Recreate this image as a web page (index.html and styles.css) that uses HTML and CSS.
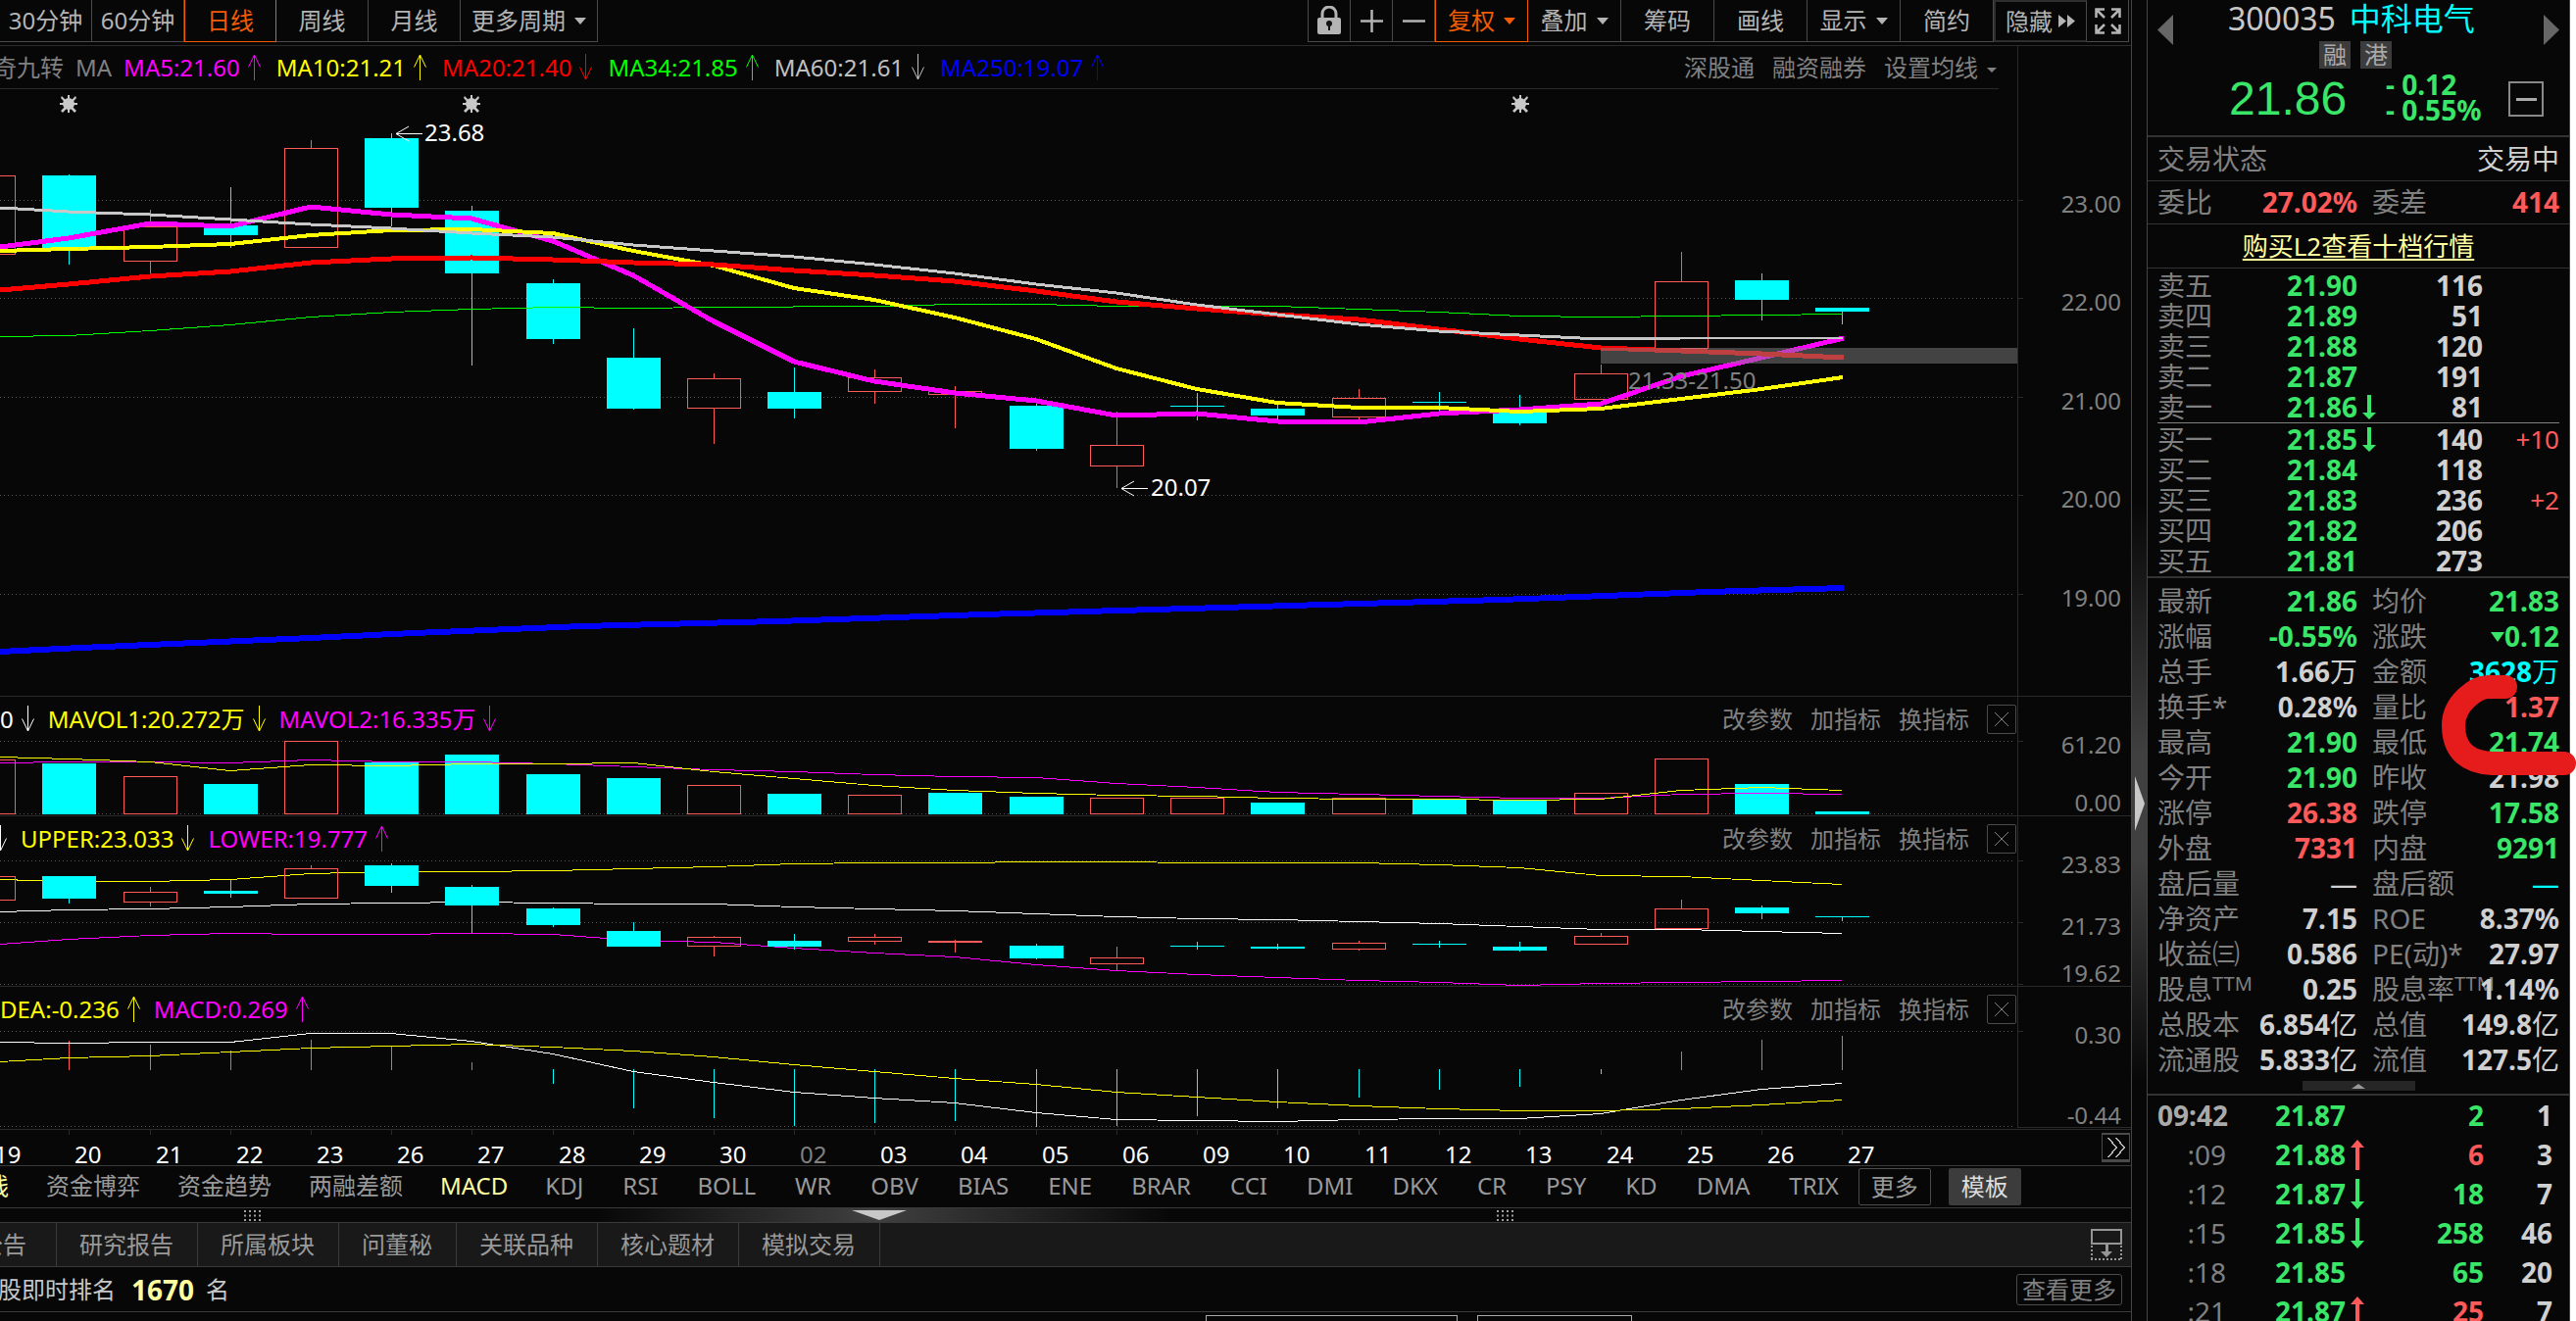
FILE: index.html
```html
<!DOCTYPE html>
<html lang="zh-CN">
<head>
<meta charset="utf-8">
<title>中科电气 300035</title>
<link rel="stylesheet" href="styles.css">
</head>
<body>
<svg class="defs" width="0" height="0" aria-hidden="true">
  <symbol id="up" viewBox="0 0 13 27"><path d="M6.500 27V1M.5 13.500 6.500 1l6 12.500" fill="none" stroke="currentColor"/></symbol>
  <symbol id="down" viewBox="0 0 13 27"><path d="M6.500 0v26M.5 13.500l6 12.500 6-12.500" fill="none" stroke="currentColor"/></symbol>
  <symbol id="fat-up" viewBox="0 0 14 31"><path d="M7 0 0 8h5v23h4V8h5z" fill="currentColor"/></symbol>
  <symbol id="fat-down" viewBox="0 0 14 25"><path d="M7 25 0 18h5V0h4v18h5z" fill="currentColor"/></symbol>
  <symbol id="gear" viewBox="-10 -10 20 20"><path d="M-1-9h2v18h-2zM-9-1H9v2H-9zM-7-8l15 15-2 2L-8-6zM7-8-8 7l2 2L8-6z" fill="#c8c8c8"/><circle r="6" fill="#c8c8c8"/></symbol>
  <symbol id="grip" viewBox="0 0 17 11"><path d="M0 1h17M0 5.500h17M0 10h17" stroke="#a0a0a0" stroke-width="2" stroke-dasharray="2 3" fill="none"/></symbol>
</svg>

<main class="market">
  <nav class="toolbar">
    <div class="group periods">
      <button>30分钟</button><button>60分钟</button><button class="on">日线</button><button>周线</button><button>月线</button><button class="more">更多周期<i class="caret"></i></button>
    </div>
    <div class="group tools">
      <button class="icon" aria-label="锁定"><svg width="26" height="30" viewBox="0 0 26 30"><path d="M6 13V8a7 7 0 0 1 14 0v5" fill="none" stroke="#b4b4b4" stroke-width="3"/><rect x="1" y="12" width="24" height="17" rx="2" fill="#b4b4b4"/><circle cx="13" cy="18" r="3" fill="#111"/><path d="M12 18h2v7h-2z" fill="#111"/></svg></button>
      <button class="icon" aria-label="放大"><svg width="23" height="23" viewBox="0 0 23 23"><path d="M11.500 0v23M0 11.500h23" stroke="#b4b4b4" stroke-width="2.500"/></svg></button>
      <button class="icon" aria-label="缩小"><svg width="23" height="23" viewBox="0 0 23 23"><path d="M0 11.500h23" stroke="#b4b4b4" stroke-width="2.500"/></svg></button>
      <button class="on">复权<i class="caret"></i></button><button>叠加<i class="caret"></i></button><button>筹码</button><button>画线</button><button>显示<i class="caret"></i></button><button>简约</button>
      <button class="hide">隐藏<svg width="18" height="13" viewBox="0 0 18 13"><path d="M0 0l8 6.500L0 13zM9 0l8 6.500L9 13z" fill="#b4b4b4"/></svg></button>
      <button class="icon" aria-label="全屏"><svg width="27" height="27" viewBox="0 0 27 27"><path d="M10 1.500H1.500V10M17 1.500h8.500V10M10 25.500H1.500V17M17 25.500h8.500V17M2 2l8 8M25 2l-8 8M2 25l8-8M25 25l-8-8" fill="none" stroke="#b4b4b4" stroke-width="2.500"/></svg></button>
    </div>
  </nav>

  <section class="panel main-panel">
    <header class="legend">
      <div class="series shifted">
        <span class="dim">神奇九转</span><span class="dim">MA</span>
        <span class="mag">MA5:21.60<svg><use href="#up"/></svg></span>
        <span class="yel">MA10:21.21<svg><use href="#up"/></svg></span>
        <span class="red">MA20:21.40<svg><use href="#down"/></svg></span>
        <span class="grn">MA34:21.85<svg><use href="#up"/></svg></span>
        <span class="gry">MA60:21.61<svg><use href="#down"/></svg></span>
        <span class="blu">MA250:19.07<svg><use href="#up"/></svg></span>
      </div>
      <div class="links"><a href="#">深股通</a><a href="#">融资融券</a><a href="#">设置均线<i class="caret"></i></a></div>
      <div class="axis-head"></div>
    </header>
    <svg class="plot" viewBox="0 91 2175 619">
      <path class="frame" d="M2058.500 91V710"/>
      <path class="grid" d="M0 204.500H2053M0 304.500H2053M0 405.500H2053M0 505.500H2053M0 606.500H2053"/>
      <path class="frame" d="M2059 204.500h5M2059 304.500h5M2059 405.500h5M2059 505.500h5M2059 606.500h5"/>
      <path class="cy" d="M43 179h55v74H43zM208 230h55v10H208zM372 141h55v71H372zM454 215h55v64H454zM537 289h55v57H537zM619 365h55v52H619zM783 400h55v17H783zM1030 414h55v44H1030zM1194 414h55v1H1194zM1276 417h55v7H1276zM1441 410h55v1H1441zM1523 421h55v11H1523zM1770 286h55v20H1770zM1852 314h55v4H1852z"/>
      <path class="cw" d="M70.500 178V270M235.500 191V253M399.500 136V231M481.500 210V373M564.500 285V351M646.500 335V418M810.500 375V427M1057.500 412V460M1221.500 401V429M1303.500 410V429M1468.500 400V420M1550.500 403V434M1797.500 279V327M1879.500 314V331"/>
      <path class="rd" d="M-40 179.500H15.500V259.500H-40M126.500 231.500h54V266.500h-54zM290.500 151.500h54V252.500h-54zM701.500 386.500h54V416.500h-54zM865.500 385.500h54V399.500h-54zM947.500 399.500h54V402.500h-54zM1112.500 454.500h54V475.500h-54zM1359.500 406.500h54V425.500h-54zM1606.500 381.500h54V407.500h-54zM1688.500 287.500h54V355.500h-54zM153.500 214V231M153.500 267V282M317.500 143V151M728.500 381V386M728.500 417V453M892.500 377V385M892.500 400V412M974.500 394V437M1139.500 420V454M1139.500 476V498M1386.500 397V406M1386.500 426V430M1633.500 372V381M1715.500 257V287"/>
      <g transform="translate(0 .5)"><polyline class="ln g" points="0,343 70,342 153,337 235,331 317,323 399,318 481,315 564,313 646,314 728,313 892,312 974,310 1057,310 1139,312 1303,312 1386,315 1468,318 1550,322 1633,323 1715,322 1797,321 1880,320"/></g>
      <polyline class="ln b w6" points="0,665 82,661 317,651 422,646 594,639 792,634 1003,627 1281,619 1531,612 1743,604 1881,600"/>
      <polyline class="ln m w5" points="0,252 70,243 153,228 235,231 317,211 399,219 481,223 564,246 646,281 728,328 810,369 892,389 974,401 1057,409 1139,424 1221,422 1303,430 1386,431 1468,422 1550,418 1633,412 1715,384 1797,365 1881,345"/>
      <polyline class="ln y w4" points="0,256 70,254 153,252 235,249 317,240 399,235 481,234 564,238 646,256 728,271 810,294 892,306 974,324 1057,346 1139,376 1221,397 1303,411 1386,416 1468,416 1550,420 1633,417 1715,407 1797,397 1880,385"/>
      <polyline class="ln r w5" points="0,296 70,290 153,282 235,277 317,268 399,264 481,263 564,265 646,268 728,270 810,276 892,281 974,287 1057,297 1139,308 1221,315 1303,321 1386,326 1468,336 1550,346 1633,355 1715,358 1797,361 1881,365"/>
      <polyline class="ln a w3" points="0,212 70,216 153,219 235,224 317,229 399,233 481,238 564,242 646,250 728,256 810,262 892,270 974,279 1057,290 1139,299 1221,311 1303,321 1386,331 1468,338 1550,342 1633,346 1715,345 1880,345"/>
      <rect class="band" x="1633" y="355" width="425" height="16"/>
      <use href="#gear" x="60" y="96" width="20" height="20"/><use href="#gear" x="471" y="96" width="20" height="20"/><use href="#gear" x="1541" y="96" width="20" height="20"/>
      <path class="mark" d="M431 136.500H404M417 129l-13 7.500 13 7.500M1171 498.500h-27M1157 491l-13 7.500 13 7.500"/>
      <text class="t white" x="433" y="144">23.68</text><text class="t white" x="1174" y="506">20.07</text><text class="t" x="1661" y="397">21.33-21.50</text>
      <text class="t end" x="2164" y="217">23.00</text><text class="t end" x="2164" y="317">22.00</text><text class="t end" x="2164" y="418">21.00</text><text class="t end" x="2164" y="518">20.00</text><text class="t end" x="2164" y="619">19.00</text>
    </svg>
  </section>

  <section class="panel">
    <header class="legend">
      <div class="series"><span class="white">0<svg><use href="#down"/></svg></span><span class="yel">MAVOL1:20.272万<svg><use href="#down"/></svg></span><span class="mag">MAVOL2:16.335万<svg><use href="#down"/></svg></span></div>
      <div class="links"><a href="#">改参数</a><a href="#">加指标</a><a href="#">换指标</a><button class="close" aria-label="关闭"><svg viewBox="0 0 14 14"><path d="M0 0l14 14M14 0 0 14" stroke="#808080"/></svg></button></div>
      <div class="axis-head"></div>
    </header>
    <svg class="plot" viewBox="0 756 2175 76">
      <path class="frame" d="M2058.500 756V832M2059 756.500h5"/>
      <path class="grid" d="M0 756.500H2053M0 830.500H2053"/>
      <path class="cy" d="M43 779h55V831H43zM208 800h55V831H208zM372 778h55V831H372zM454 770h55V831H454zM537 790h55V831H537zM619 794h55V831H619zM783 810h55V831H783zM947 809h55V831H947zM1030 813h55V831H1030zM1276 819h55V831H1276zM1441 815h55V831H1441zM1523 816h55V831H1523zM1770 800h55V831H1770zM1852 828h55V831H1852z"/>
      <path class="rd" d="M-40 775.500H15.500V830.500H-40M126.500 792.500h54V830.500h-54zM290.500 756.500h54V830.500h-54zM701.500 801.500h54V830.500h-54zM865.500 811.500h54V830.500h-54zM1112.500 814.500h54V830.500h-54zM1194.500 814.500h54V830.500h-54zM1359.500 814.500h54V830.500h-54zM1606.500 809.500h54V830.500h-54zM1688.500 774.500h54V830.500h-54z"/>
      <g transform="translate(0 .5)">
      <polyline class="ln m" points="0,778 70,777 153,777 235,778 317,775 399,777 481,777 564,779 646,782 728,785 810,787 892,790 974,792 1057,793 1139,799 1221,803 1303,808 1386,810 1468,812 1550,814 1633,814 1715,810 1797,809 1879,810"/>
      <polyline class="ln y" points="0,772 70,774 153,777 235,786 317,780 399,781 481,779 564,779 646,778 728,787 810,794 892,801 974,806 1057,809 1139,811 1221,812 1303,814 1386,815 1468,815 1550,816 1633,815 1715,806 1797,803 1879,806"/>
      </g>
      <text class="t end" x="2164" y="769">61.20</text><text class="t end" x="2164" y="828">0.00</text>
    </svg>
  </section>

  <section class="panel">
    <header class="legend">
      <div class="series boll"><span class="white"><svg><use href="#down"/></svg></span><span class="yel">UPPER:23.033<svg><use href="#down"/></svg></span><span class="mag">LOWER:19.777<svg><use href="#up"/></svg></span></div>
      <div class="links"><a href="#">改参数</a><a href="#">加指标</a><a href="#">换指标</a><button class="close" aria-label="关闭"><svg viewBox="0 0 14 14"><path d="M0 0l14 14M14 0 0 14" stroke="#808080"/></svg></button></div>
      <div class="axis-head"></div>
    </header>
    <svg class="plot" viewBox="0 878 2175 128">
      <path class="frame" d="M2058.500 878V1006M2059 878.500h5M2059 941.500h5M2059 1004.500h5"/>
      <path class="grid" d="M0 878.500H2053M0 941.500H2053M0 1004.500H2053"/>
      <g transform="translate(0 .5)">
      <polyline class="ln y" points="0,897 70,899 153,899 235,897 317,891 399,889 481,889 564,888 646,886 728,884 810,881 892,880 974,880 1057,879 1139,879 1221,880 1386,880 1468,882 1550,885 1633,893 1715,894 1797,898 1879,902"/>
      <polyline class="ln w" points="0,930 70,928 153,927 235,925 317,922 399,921 481,920 564,921 646,922 728,922 810,925 892,927 974,929 1057,932 1139,935 1221,937 1303,938 1386,940 1468,942 1550,945 1633,948 1715,948 1797,950 1879,952"/>
      <polyline class="ln m" points="0,963 70,958 153,954 235,952 317,953 399,953 481,952 564,953 646,959 728,961 810,967 892,972 974,976 1057,984 1139,990 1221,994 1303,997 1386,1000 1468,1002 1550,1005 1633,1003 1715,1002 1797,1001 1879,1000"/>
      </g>
      <path class="cy" d="M43 894h55V917H43zM208 909h55V912H208zM372 883h55V904H372zM454 905h55V924H454zM537 927h55V944H537zM619 950h55V966H619zM783 960h55V966H783zM1030 965h55V978H1030zM1194 965h55V966H1194zM1276 966h55V968H1276zM1441 963h55V964H1441zM1523 966h55V970H1523zM1770 926h55V932H1770zM1852 935h55V936H1852z"/>
      <path class="cw" d="M70.500 894V922M235.500 898V916M399.500 881V911M481.500 903V952M564.500 926V946M646.500 941V966M810.500 953V969M1057.500 963V979M1221.500 961V969M1303.500 963V969M1468.500 960V967M1550.500 961V971M1797.500 924V938M1879.500 935V940"/>
      <path class="rd" d="M-40 894.500H15.500V918.500H-40M126.500 910.500h54V920.500h-54zM290.500 886.500h54V916.500h-54zM701.500 956.500h54V965.500h-54zM865.500 956.500h54V960.500h-54zM947.500 960.500h54V961.500h-54zM1112.500 977.500h54V983.500h-54zM1359.500 962.500h54V968.500h-54zM1606.500 955.500h54V963.500h-54zM1688.500 927.500h54V947.500h-54zM153.500 905V910M153.500 921V925M317.500 883V886M728.500 955V956M728.500 966V976M892.500 953V956M892.500 961V964M974.500 959V972M1139.500 966V977M1139.500 984V990M1386.500 960V962M1386.500 969V970M1633.500 952V955M1715.500 918V927"/>
      <text class="t end" x="2164" y="891">23.83</text><text class="t end" x="2164" y="954">21.73</text><text class="t end" x="2164" y="1002">19.62</text>
    </svg>
  </section>

  <section class="panel">
    <header class="legend">
      <div class="series"><span class="yel">DEA:-0.236<svg><use href="#up"/></svg></span><span class="mag">MACD:0.269<svg><use href="#up"/></svg></span></div>
      <div class="links"><a href="#">改参数</a><a href="#">加指标</a><a href="#">换指标</a><button class="close" aria-label="关闭"><svg viewBox="0 0 14 14"><path d="M0 0l14 14M14 0 0 14" stroke="#808080"/></svg></button></div>
      <div class="axis-head"></div>
    </header>
    <svg class="plot" viewBox="0 1052 2175 100">
      <path class="frame" d="M2058.500 1052V1150.500H2174M2059 1052.500h5"/>
      <path class="grid" d="M0 1052.500H2053M0 1149.500H2053"/>
      <path class="rd" d="M70.500 1062V1092M153.500 1066V1092M235.500 1072V1092M317.500 1061V1092M399.500 1067V1092M481.500 1084V1092M1715.500 1073V1092M1797.500 1061V1092M1879.500 1057V1092"/>
      <path class="cw" d="M564.500 1091V1106M646.500 1091V1131M728.500 1091V1141M810.500 1091V1149M892.500 1091V1146M974.500 1091V1144M1057.500 1091V1150M1139.500 1091V1149M1221.500 1091V1139M1303.500 1091V1131M1386.500 1091V1120M1468.500 1091V1112M1550.500 1091V1109M1633.500 1091V1096"/>
      <g transform="translate(0 .5)">
      <polyline class="ln w" points="0,1063 70,1064 153,1063 235,1063 317,1054 399,1054 481,1062 564,1075 646,1093 728,1104 810,1114 892,1120 974,1125 1057,1135 1139,1142 1221,1143 1303,1144 1386,1142 1468,1141 1550,1141 1633,1136 1715,1122 1797,1111 1879,1105"/>
      <polyline class="ln y" points="0,1083 70,1079 153,1077 235,1073 317,1069 399,1067 481,1065 564,1068 646,1072 728,1078 810,1086 892,1093 974,1100 1057,1106 1139,1114 1221,1119 1303,1124 1386,1128 1468,1131 1550,1133 1633,1133 1715,1131 1797,1127 1879,1122"/>
      </g>
      <text class="t end" x="2164" y="1065">0.30</text><text class="t end" x="2164" y="1147">-0.44</text>
    </svg>
  </section>

  <div class="dates">
    <svg viewBox="0 1153 2144 36">
      <path class="frame" d="M70.500 1153v5M153.500 1153v5M235.500 1153v5M317.500 1153v5M399.500 1153v5M481.500 1153v5M564.500 1153v5M646.500 1153v5M728.500 1153v5M810.500 1153v5M892.500 1153v5M974.500 1153v5M1057.500 1153v5M1139.500 1153v5M1221.500 1153v5M1303.500 1153v5M1386.500 1153v5M1468.500 1153v5M1550.500 1153v5M1633.500 1153v5M1715.500 1153v5M1797.500 1153v5M1879.500 1153v5"/>
      <g class="t white"><text x="-6" y="1187">19</text><text x="76" y="1187">20</text><text x="159" y="1187">21</text><text x="241" y="1187">22</text><text x="323" y="1187">23</text><text x="405" y="1187">26</text><text x="487" y="1187">27</text><text x="570" y="1187">28</text><text x="652" y="1187">29</text><text x="734" y="1187">30</text><text class="t" x="816" y="1187">02</text><text x="898" y="1187">03</text><text x="980" y="1187">04</text><text x="1063" y="1187">05</text><text x="1145" y="1187">06</text><text x="1227" y="1187">09</text><text x="1309" y="1187">10</text><text x="1392" y="1187">11</text><text x="1474" y="1187">12</text><text x="1556" y="1187">13</text><text x="1639" y="1187">24</text><text x="1721" y="1187">25</text><text x="1803" y="1187">26</text><text x="1885" y="1187">27</text></g>
    </svg>
    <button class="next" aria-label="下一页"><svg width="18" height="20" viewBox="0 0 18 20"><path d="M1 0l8 10-8 10M9 0l8 10-8 10" fill="none" stroke="#b4b4b4" stroke-width="1.500"/></svg></button>
  </div>

  <nav class="indicators">
    <button class="on">均线</button><button>资金博弈</button><button>资金趋势</button><button>两融差额</button><button class="on">MACD</button><button>KDJ</button><button>RSI</button><button>BOLL</button><button>WR</button><button>OBV</button><button>BIAS</button><button>ENE</button><button>BRAR</button><button>CCI</button><button>DMI</button><button>DKX</button><button>CR</button><button>PSY</button><button>KD</button><button>DMA</button><button>TRIX</button>
    <span class="boxed"><button class="outline">更多</button><button class="solid">模板</button></span>
  </nav>

  <div class="hsplit">
    <svg width="17" height="11"><use href="#grip"/></svg>
    <svg width="56" height="10" viewBox="0 0 56 10"><path d="M0 0h56L28 10z" fill="#c8c8c8"/></svg>
    <svg width="17" height="11"><use href="#grip"/></svg>
  </div>

  <nav class="info-tabs">
    <button>公司公告</button><button>研究报告</button><button>所属板块</button><button>问董秘</button><button>关联品种</button><button>核心题材</button><button>模拟交易</button>
    <a class="dock" href="#" aria-label="收起"><svg width="32" height="33" viewBox="0 0 32 33"><path d="M1 1h30v14H1z" fill="none" stroke="#969696" stroke-width="2"/><path d="M15 15h3v8h4l-6 6-6-6h5z" fill="#969696"/><path d="M1 17v14M31 17v14M0 31h32" stroke="#969696" stroke-width="2" stroke-dasharray="2 2" fill="none"/></svg></a>
  </nav>

  <div class="rank"><p>个股即时排名<strong>1670</strong>名</p><button>查看更多</button></div>
  <div class="footer"><button class="wide">盘中涨幅分析</button><button>热点板块</button></div>
</main>

<div class="vsplit"><svg width="10" height="56" viewBox="0 0 10 56"><path d="M0 0l10 28L0 56z" fill="#c8c8c8"/></svg></div>

<aside class="quote">
  <header class="head">
    <a class="prev" href="#" aria-label="上一只"></a>
    <div class="ident">
      <h1>300035<b>中科电气</b></h1>
      <p class="tags"><span>融</span><span>港</span></p>
      <div class="price"><strong>21.86</strong><span>- 0.12<br>- 0.55%</span><button aria-label="折叠"></button></div>
    </div>
    <a class="succ" href="#" aria-label="下一只"></a>
  </header>
  <div class="line"><span>交易状态</span><span class="lit">交易中</span></div>
  <table class="line-table facts"><tr><th>委比</th><td class="up">27.02%</td><th>委差</th><td class="up">414</td></tr></table>
  <div class="line center"><a href="#">购买L2查看十档行情</a></div>

  <table class="book sell">
    <tr><th>卖五</th><td>21.90</td><td></td><td>116</td><td></td></tr>
    <tr><th>卖四</th><td>21.89</td><td></td><td>51</td><td></td></tr>
    <tr><th>卖三</th><td>21.88</td><td></td><td>120</td><td></td></tr>
    <tr><th>卖二</th><td>21.87</td><td></td><td>191</td><td></td></tr>
    <tr><th>卖一</th><td>21.86</td><td><svg width="14" height="25"><use href="#fat-down"/></svg></td><td>81</td><td></td></tr>
  </table>
  <hr>
  <table class="book">
    <tr><th>买一</th><td>21.85</td><td><svg width="14" height="25"><use href="#fat-down"/></svg></td><td>140</td><td>+10</td></tr>
    <tr><th>买二</th><td>21.84</td><td></td><td>118</td><td></td></tr>
    <tr><th>买三</th><td>21.83</td><td></td><td>236</td><td>+2</td></tr>
    <tr><th>买四</th><td>21.82</td><td></td><td>206</td><td></td></tr>
    <tr><th>买五</th><td>21.81</td><td></td><td>273</td><td></td></tr>
  </table>

  <div class="detail">
    <table class="facts">
      <tr><th>最新</th><td class="dn">21.86</td><th>均价</th><td class="dn">21.83</td></tr>
      <tr><th>涨幅</th><td class="dn">-0.55%</td><th>涨跌</th><td class="dn"><i class="drop"></i>0.12</td></tr>
      <tr><th>总手</th><td>1.66<i>万</i></td><th>金额</th><td class="cyan">3628<i>万</i></td></tr>
      <tr><th>换手*</th><td>0.28%</td><th>量比</th><td class="up">1.37</td></tr>
      <tr><th>最高</th><td class="dn">21.90</td><th>最低</th><td class="dn">21.74</td></tr>
      <tr><th>今开</th><td class="dn">21.90</td><th>昨收</th><td>21.98</td></tr>
      <tr><th>涨停</th><td class="up">26.38</td><th>跌停</th><td class="dn">17.58</td></tr>
      <tr><th>外盘</th><td class="up">7331</td><th>内盘</th><td class="dn">9291</td></tr>
      <tr><th>盘后量</th><td><i>—</i></td><th>盘后额</th><td class="cyan"><i>—</i></td></tr>
      <tr><th>净资产</th><td>7.15</td><th>ROE</th><td>8.37%</td></tr>
      <tr><th>收益㈢</th><td>0.586</td><th>PE(动)*</th><td>27.97</td></tr>
      <tr><th>股息<sup>TTM</sup></th><td>0.25</td><th>股息率<sup>TTM</sup></th><td>1.14%</td></tr>
      <tr><th>总股本</th><td>6.854<i>亿</i></td><th>总值</th><td>149.8<i>亿</i></td></tr>
      <tr><th>流通股</th><td>5.833<i>亿</i></td><th>流值</th><td>127.5<i>亿</i></td></tr>
    </table>
    <button class="fold" aria-label="收起"></button>
    <svg class="circle" width="140" height="106" viewBox="2488 687 140 106"><path d="M2556 701H2538C2526 701 2503 718 2503 740 2503 766 2518 779 2546 779H2616" fill="none" stroke="#e61c1c" stroke-width="24" stroke-linecap="round"/></svg>
  </div>

  <table class="ticks">
    <tr><th class="full">09:42</th><td class="dn">21.87</td><td></td><td class="dn">2</td><td>1</td></tr>
    <tr><th>:09</th><td class="dn">21.88</td><td class="up"><svg width="14" height="31"><use href="#fat-up"/></svg></td><td class="up">6</td><td>3</td></tr>
    <tr><th>:12</th><td class="dn">21.87</td><td class="dn"><svg class="flip" width="14" height="31"><use href="#fat-up"/></svg></td><td class="dn">18</td><td>7</td></tr>
    <tr><th>:15</th><td class="dn">21.85</td><td class="dn"><svg class="flip" width="14" height="31"><use href="#fat-up"/></svg></td><td class="dn">258</td><td>46</td></tr>
    <tr><th>:18</th><td class="dn">21.85</td><td></td><td class="dn">65</td><td>20</td></tr>
    <tr><th>:21</th><td class="dn">21.87</td><td class="up"><svg width="14" height="31"><use href="#fat-up"/></svg></td><td class="up">25</td><td>7</td></tr>
  </table>
</aside>
</body>
</html>
```
FILE: styles.css
```css
* { box-sizing: border-box; }
html, body { height: 100%; }
body {
  margin: 0;
  padding-right: 6px;
  display: flex;
  overflow: hidden;
  background: #fff;
  color: #808080;
  font: 24px/32px "Noto Sans", "Noto Sans CJK SC", sans-serif;
}
button {
  margin: 0;
  padding: 0;
  border: 0;
  background: none;
  color: inherit;
  font: inherit;
  white-space: nowrap;
}
a { color: inherit; text-decoration: none; }
p, h1 { margin: 0; font: inherit; }
svg { flex: none; }
.defs { position: absolute; }

.market, .quote { background: #070707; }
.market { flex: 1; min-width: 0; overflow: hidden; border-right: 1px solid #444; }

.caret {
  display: inline-block;
  margin-left: 9px;
  border: 6px solid transparent;
  border-top: 7px solid currentColor;
  border-bottom: 0;
}

/* top toolbar */
.toolbar {
  display: flex;
  justify-content: space-between;
  height: 47px;
  padding-right: 2px;
  border-bottom: 1px solid #2a2a2a;
  color: #b4b4b4;
}
.group { display: flex; height: 43px; }
.group button {
  display: flex;
  align-items: center;
  justify-content: center;
  width: 94px;
  border: solid #4a4a4a;
  border-width: 0 1px 1px 0;
}
.group .more { width: 140px; }
.group .on { color: #f25c05; border-color: #f25c05; border-left-width: 1px; }
.tools { border-left: 1px solid #4a4a4a; }
.tools button { width: 95px; }
.tools .icon { width: 43px; }
.tools .hide { gap: 6px; border: 2px solid #2e2e2e; border-right: 1px solid #4a4a4a; }

/* chart panels */
.panel { border-bottom: 1px solid #2a2a2a; }
.legend { display: flex; align-items: center; height: 45px; }
.main-panel .legend { height: 44px; }
.main-panel .series, .main-panel .links { border-bottom: 1px solid #2a2a2a; }
.series { display: flex; align-items: center; flex: 1; gap: 14px; height: 100%; min-width: 0; white-space: nowrap; }
.series span { display: flex; align-items: center; gap: 8px; }
.series svg { width: 13px; height: 27px; }
.series.shifted { gap: 16px; margin-left: -31px; }
.shifted .dim + .dim { margin-left: -4px; margin-right: -4px; }
.boll { margin-left: -6px; }
.links { display: flex; align-items: center; gap: 18px; height: 100%; padding-right: 1px; }
.main-panel .links { padding-right: 2px; margin-right: 19px; }
.links a { white-space: nowrap; }
.links .caret { vertical-align: 4px; border-width: 5px; border-bottom: 0; }
.close { display: grid; place-items: center; width: 30px; height: 30px; border: 1px solid #4a4a4a; border-radius: 2px; }
.close svg { width: 14px; height: 14px; }
.axis-head { width: 116px; height: 100%; border-left: 1px solid #2a2a2a; }
.plot { display: block; width: calc(100% + 1px); height: auto; overflow: visible; }

.dim { color: #808080; }
.mag { color: #f0f; }
.yel { color: #ff0; }
.red { color: #f00; }
.grn { color: #0f0; }
.gry { color: #c0c0c0; }
.blu { color: #00f; }
.white { color: #fff; }

.plot path, .plot polyline, .plot rect, .dates path { shape-rendering: crispEdges; }
.frame { fill: none; stroke: #2a2a2a; }
.grid { fill: none; stroke: #555; stroke-dasharray: 1 3; }
.cy { fill: #0ff; }
.cw { fill: none; stroke: #0ff; }
.rd { fill: none; stroke: #ff5a5a; }
.ln { fill: none; stroke-width: 1; }
.m { stroke: #f0f; }
.y { stroke: #ff0; }
.r { stroke: #f00; }
.g { stroke: #0f0; }
.b { stroke: #00f; }
.a { stroke: #c8c8c8; }
.w { stroke: #fff; }
.w3 { stroke-width: 3; }
.w4 { stroke-width: 4; }
.w5 { stroke-width: 5; }
.w6 { stroke-width: 6; }
.band { fill: #808080; fill-opacity: .5; }
.plot .mark { fill: none; stroke: #fff; shape-rendering: auto; }
.t { fill: #808080; font-size: 24px; }
.t.white { fill: #fff; }
.end { text-anchor: end; }

.dates { display: flex; align-items: center; height: 37px; border-bottom: 1px solid #3a3a3a; }
.dates > svg { flex: 1; min-width: 0; overflow: visible; }
.next { display: grid; place-items: center; width: 29px; height: 30px; margin-right: 1px; border: 1px solid #4a4a4a; border-width: 2px 1px 3px; }

/* indicator switcher */
.indicators { display: flex; align-items: center; gap: 38px; height: 42px; margin-left: -39px; padding-bottom: 2px; color: #999; }
.indicators > button:nth-child(n+7) { margin-left: 2px; }
.indicators .on { color: #ffffa0; }
.boxed { display: flex; gap: 18px; margin-left: -18px; padding-top: 2px; }
.boxed button { width: 74px; height: 38px; border-radius: 2px; }
.outline { border: 1px solid #4a4a4a; }
.boxed .solid { background: #3c3c3c; color: #ddd; }

.hsplit {
  display: flex;
  justify-content: space-between;
  align-items: center;
  height: 16px;
  padding: 0 630px 0 249px;
  border: solid #3a3a3a;
  border-width: 1px 0;
  background: linear-gradient(90deg, transparent 28%, #404040 41%, transparent 55%);
}

.info-tabs { display: flex; height: 45px; border-bottom: 1px solid #3a3a3a; background: #191919; color: #999; }
.info-tabs button { padding: 0 24px 0 23px; border-right: 1px solid #3a3a3a; }
.info-tabs button:first-child { margin-left: -92px; padding-right: 30px; }
.dock { display: flex; align-items: center; margin-left: auto; padding-right: 9px; }

.rank { display: flex; align-items: center; justify-content: space-between; height: 46px; padding-right: 9px; border-bottom: 1px solid #3a3a3a; }
.rank p { display: flex; align-items: center; margin-left: -26px; color: #c8c8c8; }
.rank strong { margin: 0 12px 0 16px; color: #ffffa0; font-size: 28px; }
.rank button { width: 108px; height: 32px; line-height: 28px; border: 1px solid #4a4a4a; border-radius: 3px; }
.footer { display: flex; gap: 20px; padding: 3px 0 0 1230px; }
.footer button { width: 158px; height: 36px; border: 1px solid #aaa; }
.footer .wide { width: 257px; }

.vsplit {
  display: flex;
  flex: none;
  align-items: center;
  width: 15px;
  padding: 291px 0 0 3px;
  background: linear-gradient(transparent 38%, #404040 57%, #404040 65%, transparent 82%) #070707;
}

/* quote side */
.quote { flex: none; width: 432px; border: solid #444; border-width: 0 1px; font-size: 28px; line-height: 31px; }
.quote table { border-spacing: 0; table-layout: fixed; width: 100%; white-space: nowrap; }
.quote th { padding: 0; text-align: left; font-weight: 400; }
.quote td { padding: 0; text-align: right; font-weight: 700; color: #d0d0d0; }
.quote td i { font-style: normal; font-weight: 400; }
.quote td svg { display: block; margin-left: 5px; }
.quote td.up, .up { color: #ff5a5a; }
.quote td.dn, .dn { color: #3ae667; }
.quote td.cyan { color: #0ff; }
.quote hr { height: 1px; margin: 0 10px 1px; border: 0; background: #808080; }

.head { display: flex; justify-content: space-between; height: 140px; padding: 0 10px; border-bottom: 2px solid #333; }
.prev, .succ { width: 16px; height: 31px; margin-top: 15px; background: #666; clip-path: polygon(100% 0, 100% 100%, 0 50%); }
.succ { clip-path: polygon(0 0, 100% 50%, 0 100%); }
.ident { width: 320px; }
.head h1 { display: flex; gap: 14px; height: 42px; padding-left: 27px; font-size: 32px; line-height: 38px; color: #c8c8c8; white-space: nowrap; }
.head b { color: #0ff; font-weight: 400; }
.tags { display: flex; justify-content: center; gap: 10px; margin-right: 6px; }
.tags span { width: 32px; height: 28px; background: #3c3c3c; color: #aaa; font-size: 24px; line-height: 28px; text-align: center; }
.price { display: flex; align-items: center; height: 62px; margin: 0 -29px 0 28px; color: #3ae667; }
.price strong { width: 160px; font: 48px/56px "Liberation Sans", sans-serif; }
.price span { flex: 1; padding-bottom: 5px; font-weight: 700; line-height: 26px; white-space: nowrap; }
.price button { display: grid; place-items: center; width: 36px; height: 36px; border: 2px solid #888; }
.price button::before { content: ""; width: 21px; height: 3px; background: #aaa; }

.line { display: flex; justify-content: space-between; align-items: center; height: 45px; padding: 0 10px; border-bottom: 1px solid #333; }
.lit { color: #d0d0d0; }
.center { justify-content: center; font-size: 26px; }
.center a { color: #ffffa0; text-decoration: underline; text-decoration-thickness: 2px; text-underline-offset: 3px; }

.line-table { height: 44px; padding: 0 10px; border-bottom: 1px solid #333; }
.facts th:nth-child(1) { width: 94px; }
.facts td:nth-child(2) { width: 110px; }
.facts th:nth-child(3) { width: 100px; padding-left: 15px; }

.book { padding: 0 10px; }
.book th { width: 84px; }
.book tr { height: 31px; }
.book td:nth-child(2) { width: 120px; color: #3ae667; }
.book td:nth-child(3) { width: 24px; color: #3ae667; }
.book td:nth-child(4) { width: 104px; }
.book td:nth-child(5) { color: #ff5a5a; font-weight: 400; font-size: 26px; }
.sell { padding-top: 2px; }

.detail { position: relative; padding: 5px 10px 0; height: 530px; border: solid #333; border-width: 2px 0; }
.detail tr { height: 36px; }
.detail sup { font-size: 20px; line-height: 10px; vertical-align: 9px; }
.drop { display: inline-block; border: 7px solid transparent; border-top: 10px solid currentColor; border-bottom: 0; vertical-align: 5px; }
.fold { display: grid; place-items: center; width: 115px; height: 10px; margin: 4px auto 0; background: #262626; }
.fold::before { content: ""; border: 7px solid transparent; border-bottom: 5px solid #999; border-top: 0; }
.circle { position: absolute; right: -7px; top: 97px; }

.ticks { padding: 0 17px 0 10px; }
.ticks tr { height: 40px; }
.quote .ticks th { width: 70px; text-align: right; }
.quote .ticks .full { color: #aaa; font-weight: 700; }
.ticks td:nth-child(2) { width: 122px; }
.ticks td:nth-child(3) { width: 24px; }
.ticks td:nth-child(4) { width: 117px; }
.flip { transform: rotate(180deg); }
```
